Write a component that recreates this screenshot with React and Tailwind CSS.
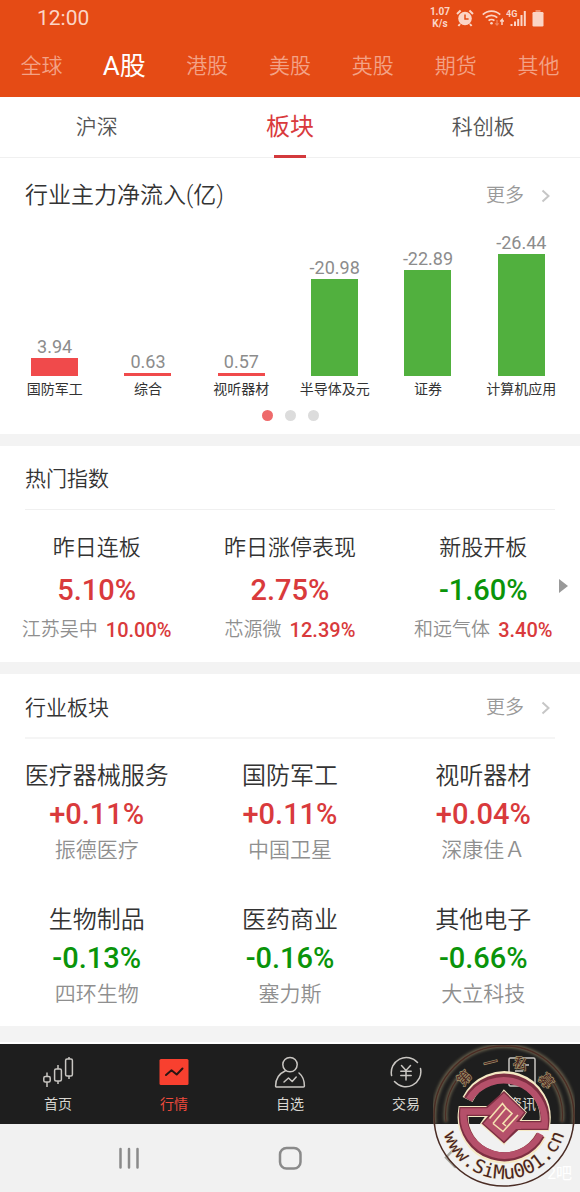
const markets = ["全球", "A股", "港股", "美股", "英股", "期货", "其他"]

const flows = [
  { name: "国防军工", value: "3.94", height: 18 },
  { name: "综合", value: "0.63", height: 3 },
  { name: "视听器材", value: "0.57", height: 3 },
  { name: "半导体及元", value: "-20.98", height: 97 },
  { name: "证券", value: "-22.89", height: 106 },
  { name: "计算机应用", value: "-26.44", height: 122 },
]

const hotIndexes = [
  { name: "昨日连板", change: "5.10%", stock: "江苏吴中", stockChange: "10.00%" },
  { name: "昨日涨停表现", change: "2.75%", stock: "芯源微", stockChange: "12.39%" },
  { name: "新股开板", change: "-1.60%", stock: "和远气体", stockChange: "3.40%" },
]

const sectors = [
  { name: "医疗器械服务", change: "+0.11%", stock: "振德医疗" },
  { name: "国防军工", change: "+0.11%", stock: "中国卫星" },
  { name: "视听器材", change: "+0.04%", stock: "深康佳Ａ" },
  { name: "生物制品", change: "-0.13%", stock: "四环生物" },
  { name: "医药商业", change: "-0.16%", stock: "塞力斯" },
  { name: "其他电子", change: "-0.66%", stock: "大立科技" },
]

const changeColor = (change) =>
  change.startsWith("-") ? "text-[#0a940a]" : "text-[#d93a3c]"

const StatusBar = () => (
  <div className="flex h-9 items-center justify-between pl-[37px] pr-9 text-[#fbd5c6]">
    <span className="text-[21px] leading-6">12:00</span>
    <div className="flex items-center">
      <div className="mr-1.5 text-center text-[10px] font-bold leading-3">
        <div>1.07</div>
        <div>K/s</div>
      </div>
      <svg className="mr-2 h-[18px] w-[18px]" viewBox="0 0 18 18" fill="none">
        <circle cx="9" cy="9.5" r="6.8" fill="currentColor" />
        <path d="M1 5 4.6 1.6M17 5l-3.6-3.4M4 15l-1.6 2M14 15l1.6 2" stroke="currentColor" strokeWidth="2" />
        <path d="M9 5.4V10h3.6" stroke="#e54b15" strokeWidth="1.5" />
      </svg>
      <svg className="mr-0.5 h-[18px] w-[22px]" viewBox="0 0 22 18" fill="none" stroke="currentColor">
        <path d="M.8 5.6a12.5 12.5 0 0 1 17.4 0M3.7 8.7a8.3 8.3 0 0 1 11.6 0M6.6 11.7a4.2 4.2 0 0 1 5.8 0" strokeWidth="1.8" />
        <circle cx="9.5" cy="14.2" r="1.3" fill="currentColor" stroke="none" />
        <path d="M15 11v5M13.4 14.4l1.6 1.8 1.6-1.8" strokeWidth="1.2" opacity=".45" />
        <path d="M20 16v-5.4l-1.8 2M20 10.6l1.8 2" strokeWidth="1.5" />
      </svg>
      <svg className="mr-1.5 h-[18px] w-5" viewBox="0 0 20 18" fill="currentColor">
        <text x="0" y="8" fontSize="9" fontWeight="700">4G</text>
        <path d="M4.5 15h2v2h-2zM8 12.5h2V17H8zM11.2 10h2v7h-2zM14.5 6h2v11h-2zM17.8 2h2v15h-2z" />
      </svg>
      <svg className="h-[18px] w-3" viewBox="0 0 12 18" fill="currentColor">
        <path d="M3.5 1h5v2h-5z" opacity=".5" />
        <rect x=".5" y="3" width="11" height="14.5" rx="1.2" />
      </svg>
    </div>
  </div>
)

const MoreLink = () => (
  <a href="#more" className="flex items-center text-[19px] font-[350] leading-7 text-[#999]">
    更多
    <svg className="ml-4 h-4 w-3" viewBox="0 0 12 16" fill="none" stroke="#c6c6c6" strokeWidth="2">
      <path d="M2.5 2.5 8.5 8l-6 5.5" />
    </svg>
  </a>
)

const FlowBar = ({ name, value, height }) => {
  const negative = value.startsWith("-")
  return (
    <div className="flex flex-col items-center justify-end whitespace-nowrap">
      <span className="text-[18px] leading-[22px] text-[#8c8c8c]">{value}</span>
      <div
        className={`w-[47px] ${negative ? "bg-[#51b03e]" : "bg-[#f04a4b]"}`}
        style={{ height }}
      />
      <span className="mt-0.5 text-[14px] leading-[22px] text-[#333]">{name}</span>
    </div>
  )
}

const HomeIcon = () => (
  <svg className="size-8" viewBox="0 0 32 32" fill="none" stroke="#c9c6c2" strokeWidth="1.5">
    <rect x="1.8" y="20.5" width="6.4" height="5.5" rx="1.5" />
    <path d="M5 16.5v4M5 26v5M16 9v4M16 25v3M27 1v2M27 20v3" />
    <rect x="12.6" y="13" width="6.8" height="12" rx="1.5" />
    <rect x="23.6" y="3" width="6.8" height="17" rx="1.5" />
  </svg>
)

const QuotesIcon = () => (
  <svg className="size-8" viewBox="0 0 32 32" fill="none">
    <rect x="1.5" y="3" width="29" height="26" rx="1.5" fill="#f8402f" />
    <path d="m8 19 5.5-4.7 5.2 4.2 5.8-6" stroke="#2a1513" strokeWidth="2" strokeLinecap="round" strokeLinejoin="round" />
  </svg>
)

const WatchIcon = () => (
  <svg className="size-8" viewBox="0 0 32 32" fill="none" stroke="#c9c6c2" strokeWidth="1.5" strokeLinecap="round">
    <circle cx="16" cy="8.6" r="7.2" />
    <path d="M11.5 14.8C5.2 17.6 1.6 22 1.6 30a1 1 0 0 0 1 1h26.800a1 1 0 0 0 1-1c0-5.5-1.7-10-5.400-13" />
    <path d="m10 26 4.5-4 3.7 3.5 4-4.500" strokeLinejoin="round" />
  </svg>
)

const TradeIcon = () => (
  <svg className="size-8" viewBox="0 0 32 32" fill="none" stroke="#c9c6c2" strokeWidth="1.5" strokeLinecap="round">
    <path d="M1.6 19.5A15 15 0 0 1 27.5 6.500M30.500 12.500A15 15 0 0 1 4.500 25.500" />
    <path d="m11.500 9.500 4.500 5 4.500-5M10.800 15.200h10.400M10.800 19.500h10.400M16 15v9" />
  </svg>
)

const NewsIcon = () => (
  <svg className="size-8" viewBox="0 0 32 32" fill="none" stroke="#c9c6c2" strokeWidth="1.5">
    <rect x="3" y="2" width="26" height="28" rx="1.5" />
    <path d="M9 9h14M9 15h8" />
  </svg>
)

const tabs = [
  { name: "首页", Icon: HomeIcon },
  { name: "行情", Icon: QuotesIcon, active: true },
  { name: "自选", Icon: WatchIcon },
  { name: "交易", Icon: TradeIcon },
  { name: "资讯", Icon: NewsIcon },
]

const Seal = () => (
  <svg className="pointer-events-none absolute bottom-[5px] right-[5px] size-[142px]" viewBox="0 0 142 142" fill="none">
    <defs>
      <path id="seal-top" d="M21 71a50 50 0 0 1 100 0" />
      <path id="seal-bottom" d="M8 71a63 63 0 0 0 126 0" />
      <filter id="seal-glow" x="-20%" y="-20%" width="140%" height="140%">
        <feGaussianBlur stdDeviation="1.5" />
      </filter>
    </defs>
    <path d="M1.5 79a70 70 0 1 1 139 0" stroke="#8d8163" strokeWidth="4" opacity=".7" filter="url(#seal-glow)" />
    <circle cx="71" cy="71" r="70" stroke="#4a2c24" strokeWidth="1.5" />
    <path d="M13 77a58 58 0 0 1 14-46M115 31a58 58 0 0 1 14 46" stroke="#8d8163" strokeWidth="3.5" opacity=".7" filter="url(#seal-glow)" />
    <path d="M13 77a58 58 0 0 1 14-46M115 31a58 58 0 0 1 14 46" stroke="#4a2c24" strokeWidth="1.2" />
    <g stroke="#f5e9c4" strokeWidth="11">
      <path d="M34.500 54.500a41 41 0 0 1 77 26H80" />
      <path d="M56 66.500H30.500A41 41 0 0 0 108 90" />
    </g>
    <path d="M71 46.500 92 67.500 71 98 49 78.500z" stroke="#f5e9c4" strokeWidth="3" />
    <g stroke="#7d2f42" strokeWidth="9">
      <path d="M35 54.500a41 41 0 0 1 76.500 26H82" />
      <path d="M58 66.500H30.500A41 41 0 0 0 107.500 90" />
    </g>
    <path d="M53 62 71 46l22 21.500-7 9h5v8h-5L71 98.500 48.500 78.500l7-8z" fill="#7d2f42" />
    <g stroke="#b5506a" strokeWidth="6.500">
      <path d="M36 54.500a41 41 0 0 1 75.500 26H83" />
      <path d="M58 66.500H30.500A41 41 0 0 0 107.500 89" />
    </g>
    <path d="M54 63.500 71 48l20 19.500-8 9.500h5v7h-5L71 96.500 50.500 78.500l8-9z" fill="#b5506a" />
    <path d="m60 78.500 13-15.500-3.500-4.500-13 15M60 78.500l10 8L85 70M73 63l6 5.500-9 10 3 2.500" stroke="#f5e0b0" strokeWidth="1.600" />
    <g fontFamily="'Noto Sans CJK SC', sans-serif" fontSize="14" fill="#4a2520" stroke="#9c8b66" strokeWidth="1.5" paintOrder="stroke">
      <text textAnchor="middle">
        <textPath href="#seal-top" startOffset="51%">第　一　私　募</textPath>
      </text>
    </g>
    <text fontFamily="'DejaVu Sans Mono', monospace" fontSize="19" fill="#4a2520" stroke="#efe5cc" strokeWidth="1" paintOrder="stroke" textAnchor="middle">
      <textPath href="#seal-bottom" startOffset="50%">www.SiMu001.cn</textPath>
    </text>
  </svg>
)

const App = () => {
  return (
    <div className="relative flex min-h-screen flex-col bg-[#f3f3f3] font-[Roboto,'Noto_Sans_CJK_SC',sans-serif] text-[#333]">
      <header className="bg-[#e54b15]">
        <StatusBar />
        <nav className="grid h-[61px] grid-cols-7 items-center pb-0.5">
          {markets.map((market) => (
            <button
              key={market}
              className={market === "A股" ? "text-[26px] leading-8 text-white" : "text-[21px] font-[350] leading-8 text-[#f3a286]"}
            >
              {market}
            </button>
          ))}
        </nav>
      </header>

      <section className="bg-white">
        <nav className="grid h-[61px] grid-cols-3 border-b border-[#f0f0f0] font-[350]">
          <button className="text-[21px] leading-8 text-[#555]">沪深</button>
          <button className="relative text-[24px] font-normal leading-8 text-[#d93a3c]">
            板块
            <span className="absolute inset-x-0 -bottom-px mx-auto h-[3px] w-8 bg-[#d3393c]" />
          </button>
          <button className="text-[21px] leading-8 text-[#555]">科创板</button>
        </nav>
        <div className="flex items-center justify-between pb-1.5 pl-[25px] pr-7 pt-[22px]">
          <h2 className="text-[23px] font-[350] leading-8">行业主力净流入(亿)</h2>
          <MoreLink />
        </div>
        <div className="grid h-[182px] grid-cols-6 pl-2 pr-3">
          {flows.map((flow) => (
            <FlowBar key={flow.name} {...flow} />
          ))}
        </div>
        <div className="flex justify-center gap-3 pb-[13px] pt-[10px]">
          <span className="size-[11px] rounded-full bg-[#ee6a6b]" />
          <span className="size-[11px] rounded-full bg-[#dcdcdc]" />
          <span className="size-[11px] rounded-full bg-[#dcdcdc]" />
        </div>
      </section>

      <section className="relative mt-3 bg-white pb-4">
        <h2 className="mx-[25px] border-b border-[#f0f0f0] pb-[14px] pt-[17px] text-[21px] font-[350] leading-8">热门指数</h2>
        <div className="grid grid-cols-3 pt-[22px] text-center">
          {hotIndexes.map((item) => (
            <div key={item.name} className="whitespace-nowrap">
              <div className="text-[22px] font-[350] leading-8">{item.name}</div>
              <div className={`pt-2 text-[29px] font-medium leading-9 ${changeColor(item.change)}`}>
                {item.change}
              </div>
              <div className="flex justify-center gap-2 pt-1.5 text-[19px] leading-8">
                <span className="font-[350] text-[#8f8f8f]">{item.stock}</span>
                <span className="text-[20px] font-medium text-[#d93a3c]">{item.stockChange}</span>
              </div>
            </div>
          ))}
        </div>
        <svg className="absolute right-3 top-[133px] h-[14px] w-[9px]" viewBox="0 0 9 14" fill="#999">
          <path d="M0 0l9 7-9 7z" />
        </svg>
      </section>

      <section className="mt-3 bg-white pb-4">
        <div className="mx-[25px] flex items-center justify-between border-b-2 border-[#f5f5f5] pb-[13px] pr-[3px] pt-[18px]">
          <h2 className="text-[21px] font-[350] leading-8">行业板块</h2>
          <MoreLink />
        </div>
        <div className="grid grid-cols-3 gap-y-9 pt-[19px] text-center">
          {sectors.map((item) => (
            <div key={item.name} className="whitespace-nowrap">
              <div className="text-[24px] font-[350] leading-9">{item.name}</div>
              <div className={`text-[29px] font-medium leading-10 ${changeColor(item.change)}`}>{item.change}</div>
              <div className="text-[21px] font-[350] leading-8 text-[#8f8f8f]">{item.stock}</div>
            </div>
          ))}
        </div>
      </section>

      <footer className="mt-auto">
        <nav className="grid grid-cols-5 border-t-2 border-white bg-[#1e1e1e] pb-2 pt-3">
          {tabs.map(({ name, Icon, active }) => (
            <button
              key={name}
              className={`flex flex-col items-center gap-1 text-[14px] leading-6 ${active ? "text-[#ee4a3c]" : "text-[#d8d6d0]"}`}
            >
              <Icon />
              {name}
            </button>
          ))}
        </nav>
        <nav className="relative grid h-[68px] grid-cols-3 place-items-center bg-[#f1f1f1] px-12">
          <button aria-label="Recents">
            <svg className="size-6" viewBox="0 0 24 24" stroke="#8a8a8a" strokeWidth="2.5" strokeLinecap="round">
              <path d="M3.500 3v18.500M12 3v18.500M20.500 3v18.500" />
            </svg>
          </button>
          <button aria-label="Home">
            <svg className="size-6" viewBox="0 0 24 24" fill="none" stroke="#8a8a8a" strokeWidth="2.5">
              <rect x="2" y="2" width="20.5" height="20.5" rx="6.5" />
            </svg>
          </button>
          <button aria-label="Back">
            <svg className="size-6" viewBox="0 0 24 24" fill="none" stroke="#a8a8a0" strokeWidth="2.5" strokeLinecap="round">
              <path d="m16 2-9 9.500 9 9.500" />
            </svg>
          </button>
          <span className="absolute bottom-1.5 right-2 text-[16px] leading-6 text-white">2吧</span>
        </nav>
      </footer>
      <Seal />
    </div>
  )
}

export default App
